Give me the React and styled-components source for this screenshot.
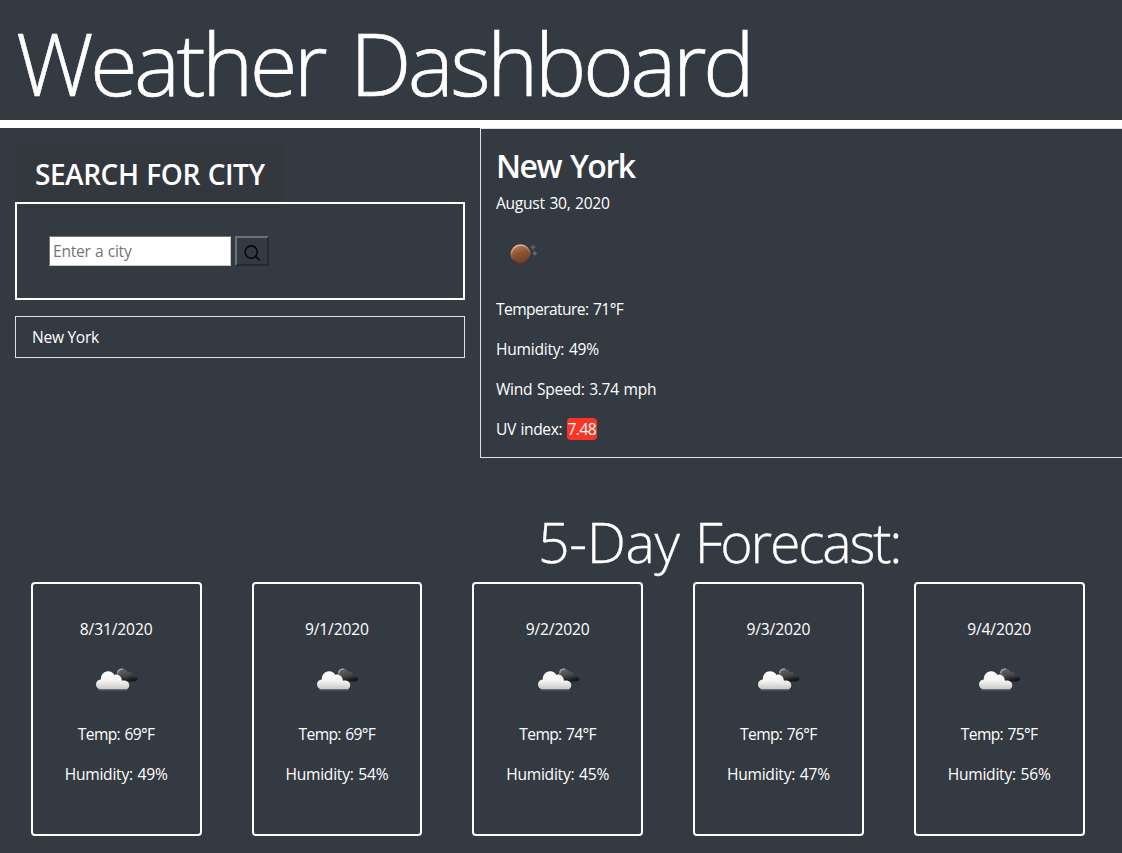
import React from 'react';
import styled, { createGlobalStyle } from 'styled-components';

const GlobalStyle = createGlobalStyle`
  *, *::before, *::after { box-sizing: border-box; }
  html { background: #343a42; }
  body {
    margin: 0;
    background: #343a42;
    color: #fff;
    font-family: 'Open Sans', 'Noto Sans', sans-serif;
    font-size: 15.6px;
    line-height: 24px;
    letter-spacing: -0.3px;
    overflow: hidden;
  }
  h1, h2, h3, p { margin: 0; }
`;

const Page = styled.div`
  width: 100%;
  height: 853px;
`;

const Header = styled.header`
  height: 128px;
  padding: 9px 16px 0;
  border-bottom: 8px solid #fff;
`;

const Title = styled.h1`
  font-size: 87px;
  font-weight: 300;
  line-height: 106px;
  letter-spacing: -3.65px;
  word-spacing: 7px;
  white-space: nowrap;
  -webkit-text-stroke: 0.6px #fff;
`;

const Main = styled.main`
  display: flex;
  height: 330px;
`;

const Sidebar = styled.section`
  flex: 0 0 480px;
  padding: 16px 15px 0;
`;

const SearchHeading = styled.h2`
  width: 270px;
  height: 58px;
  padding: 2px 20px 0;
  border-radius: 4px;
  background: #33383f;
  font-size: 28px;
  font-weight: 600;
  line-height: 56px;
  letter-spacing: -0.45px;
  word-spacing: 1px;
  white-space: nowrap;
`;

const SearchBox = styled.form`
  display: flex;
  align-items: center;
  gap: 4px;
  height: 98px;
  padding: 0 32px;
  border: 2px solid #fff;
`;

const SearchInput = styled.input`
  width: 182px;
  height: 30px;
  padding: 1px 3px;
  border: 1px solid;
  border-color: #767676 #c8c8c8 #c8c8c8 #767676;
  background: #fff;
  font: inherit;
  letter-spacing: -0.25px;
  word-spacing: 0.5px;
  outline: none;
  &::placeholder { color: #757575; opacity: 1; }
`;

const SearchButton = styled.button`
  display: flex;
  align-items: center;
  justify-content: center;
  width: 34px;
  height: 30px;
  padding: 3px 0 0;
  border: 2px solid;
  border-color: #6c727a #262a31 #262a31 #6c727a;
  background: #343a42;
  color: #060a10;
`;

const City = styled.div`
  height: 42px;
  margin-top: 16px;
  padding: 8px 16px;
  border: 1px solid #dee2e6;
`;

const Current = styled.section`
  flex: 1;
  padding: 16px 15px 0;
  border: 1px solid #dee2e6;
  border-right: 0;
`;

const CityName = styled.h2`
  height: 38px;
  margin-bottom: 8px;
  font-size: 32px;
  font-weight: 600;
  line-height: 41px;
  letter-spacing: -1.5px;
  word-spacing: 2px;
`;

const IconSlot = styled.div`
  width: 50px;
  height: 50px;
  margin: ${(p) => p.$margin};
  svg { display: block; }
`;

const Line = styled.p`
  height: 24px;
  margin-bottom: ${(p) => p.$gap ?? 16}px;
  letter-spacing: ${(p) => p.$track ?? -0.3}px;
  word-spacing: 1px;
  white-space: nowrap;
`;

const UvBadge = styled.span`
  display: inline-block;
  width: 30px;
  height: 22px;
  border-radius: 4px;
  background: #fb3526;
  letter-spacing: -0.5px;
  line-height: 22px;
  text-align: center;
`;

const ForecastTitle = styled.h2`
  height: 67px;
  margin-top: 50px;
  padding-left: 538px;
  font-size: 55.5px;
  font-weight: 300;
  line-height: 67px;
  letter-spacing: -0.4px;
  white-space: nowrap;
  -webkit-text-stroke: 0.3px #fff;
`;

const TitleWord = styled.span`
  margin-left: 1px;
  letter-spacing: -2.25px;
`;

const Forecast = styled.section`
  display: grid;
  grid-template-columns: repeat(5, 170.75px);
  gap: 50px;
  margin-top: 7px;
  padding-left: 30.75px;
`;

const DayCard = styled.article`
  display: flex;
  flex-direction: column;
  align-items: center;
  height: 254px;
  padding-top: 33px;
  border: 2px solid #fff;
  border-radius: 4px;
`;

const SearchIcon = () => (
  <svg width="16" height="16" viewBox="0 0 16 16" fill="none" stroke="currentColor" strokeWidth="1.6" strokeLinecap="round">
    <circle cx="7.2" cy="7" r="6.1" />
    <path d="M11.7 11.5 L15.2 14.8" />
  </svg>
);

const ClearNightIcon = () => (
  <svg width="50" height="50" viewBox="0 0 50 50">
    <defs>
      <linearGradient id="orb" x1="0.3" y1="0" x2="0.65" y2="1">
        <stop offset="0" stopColor="#bd8157" />
        <stop offset="0.45" stopColor="#8c542e" />
        <stop offset="1" stopColor="#67402a" />
      </linearGradient>
      <linearGradient id="orbRim" x1="0.3" y1="0" x2="0.55" y2="1">
        <stop offset="0" stopColor="#f0cdb2" />
        <stop offset="0.4" stopColor="#a87450" />
        <stop offset="0.8" stopColor="#50382f" />
      </linearGradient>
    </defs>
    <circle cx="24.6" cy="26.6" r="10.8" fill="#302e32" opacity="0.6" />
    <circle cx="24.6" cy="26.3" r="9.3" fill="url(#orb)" stroke="url(#orbRim)" strokeWidth="1.6" />
    <path d="M37 16.9 L37.8 18.5 L39.5 19.2 L37.8 20 L37 21.7 L36.2 20 L34.6 19.2 L36.2 18.5Z" fill="#6a615f" stroke="#6a615f" strokeWidth="0.6" />
    <path d="M38.7 23.2 L39.3 24.7 L40.8 25.3 L39.3 26 L38.7 27.5 L38.1 26 L36.6 25.3 L38.1 24.7Z" fill="#77706e" stroke="#77706e" strokeWidth="0.6" />
  </svg>
);

const CloudsIcon = () => (
  <svg width="50" height="50" viewBox="-0.9 -0.8 50 50">
    <defs>
      <linearGradient id="cloudFront" x1="0" y1="0" x2="0" y2="1">
        <stop offset="0" stopColor="#ffffff" />
        <stop offset="0.55" stopColor="#f3f3f1" />
        <stop offset="1" stopColor="#c9c8c5" />
      </linearGradient>
      <linearGradient id="cloudBack" x1="0" y1="0" x2="0.3" y2="1">
        <stop offset="0" stopColor="#66686a" />
        <stop offset="0.6" stopColor="#47484a" />
        <stop offset="1" stopColor="#17191b" />
      </linearGradient>
    </defs>
    <path d="M25.5 21 C24.6 16 27.5 13.3 31 13.8 C33.3 14.1 34.6 15.5 35.3 17 C38.5 16.4 40.4 18.4 41.2 20.9 C44.2 21.3 45.6 22.6 45.4 24.2 C45.1 26 43.8 26.6 42 26.6 L31 26.6Z" fill="url(#cloudBack)" />
    <path d="M25.8 18.8 C25.8 15.3 28.3 14 30.9 14.5" fill="none" stroke="#a0a1a2" strokeWidth="1.5" />
    <path d="M8.6 34.5 C5.8 34.5 4.1 32.4 4.1 29.8 C4.1 27 6.1 25.1 8.9 24.8 C8.7 20 11.8 16.4 16.1 16.4 C19 16.4 21.2 17.7 22.4 20.1 C26.1 18.9 29.7 21.3 30 25.9 C34.2 25.1 37.4 27.3 37.4 30.6 C37.4 33 35.7 34.5 33.4 34.5Z" fill="url(#cloudFront)" />
    <path d="M7 35.1 H35.2" stroke="#73777b" strokeWidth="0.9" strokeLinecap="round" />
  </svg>
);

const days = [
  { date: '8/31/2020', temp: 69, humidity: 49 },
  { date: '9/1/2020', temp: 69, humidity: 54 },
  { date: '9/2/2020', temp: 74, humidity: 45 },
  { date: '9/3/2020', temp: 76, humidity: 47 },
  { date: '9/4/2020', temp: 75, humidity: 56 },
];

export default function App() {
  return (
    <Page>
      <GlobalStyle />
      <Header>
        <Title>Weather Dashboard</Title>
      </Header>
      <Main>
        <Sidebar>
          <SearchHeading>SEARCH FOR CITY</SearchHeading>
          <SearchBox>
            <SearchInput placeholder="Enter a city" />
            <SearchButton type="button" aria-label="Search">
              <SearchIcon />
            </SearchButton>
          </SearchBox>
          <City>New York</City>
        </Sidebar>
        <Current>
          <CityName>New York</CityName>
          <Line $gap={13}>August 30, 2020</Line>
          <IconSlot $margin="0 0 19px">
            <ClearNightIcon />
          </IconSlot>
          <Line $track={-0.58}>Temperature: 71°F</Line>
          <Line $track={-0.25}>Humidity: 49%</Line>
          <Line>Wind Speed: 3.74 mph</Line>
          <Line $track={-0.4}>
            UV index: <UvBadge>7.48</UvBadge>
          </Line>
        </Current>
      </Main>
      <ForecastTitle>
        5-Day <TitleWord>Forecast:</TitleWord>
      </ForecastTitle>
      <Forecast>
        {days.map((day) => (
          <DayCard key={day.date}>
            <Line $gap={13} $track={-0.12}>{day.date}</Line>
            <IconSlot $margin="0 0 18px">
              <CloudsIcon />
            </IconSlot>
            <Line $track={-0.65}>Temp: {day.temp}°F</Line>
            <Line $track={-0.25}>Humidity: {day.humidity}%</Line>
          </DayCard>
        ))}
      </Forecast>
    </Page>
  );
}
